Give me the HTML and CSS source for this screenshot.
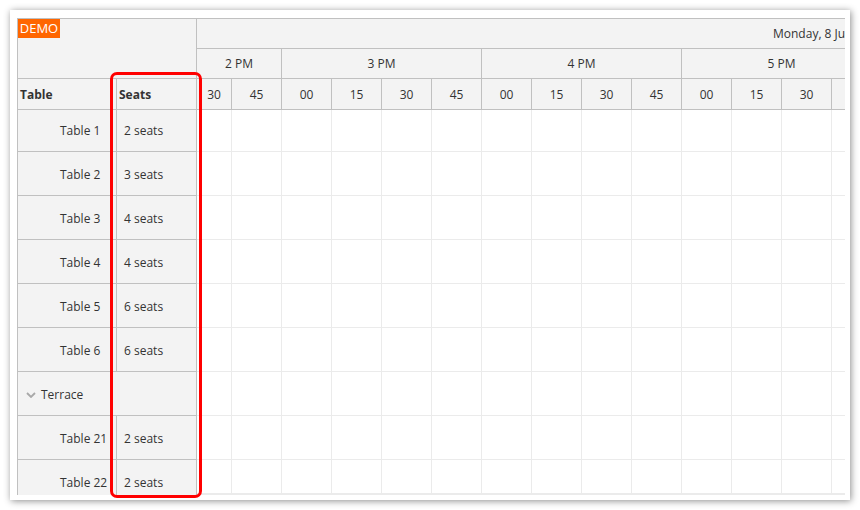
FILE: index.html
```html
<!DOCTYPE html>
<html lang="en">
<head>
    <meta charset="UTF-8">
    <meta name="viewport" content="width=device-width, initial-scale=1.0">
    <title>Restaurant Tables</title>
    <link rel="stylesheet" href="styles.css">
</head>
<body>

<div class="frame">
    <div class="scheduler">
        <span class="demo">DEMO</span>

        <!-- row headers: table + seats -->
        <div class="rows-pane">
            <div class="corner"></div>
            <div class="colheads">
                <div class="c-name">Table</div>
                <div class="c-seats">Seats</div>
            </div>
            <div class="row first"><div class="c-name">Table 1</div><div class="c-seats">2 seats</div></div>
            <div class="row"><div class="c-name">Table 2</div><div class="c-seats">3 seats</div></div>
            <div class="row"><div class="c-name">Table 3</div><div class="c-seats">4 seats</div></div>
            <div class="row"><div class="c-name">Table 4</div><div class="c-seats">4 seats</div></div>
            <div class="row"><div class="c-name">Table 5</div><div class="c-seats">6 seats</div></div>
            <div class="row"><div class="c-name">Table 6</div><div class="c-seats">6 seats</div></div>
            <div class="row group">
                <div class="c-group">
                    <svg class="chevron" width="10" height="6" viewBox="0 0 10 6"><polyline points="1,1 5,5 9,1" fill="none" stroke="#a8a8a8" stroke-width="1.8"/></svg>
                    Terrace
                </div>
            </div>
            <div class="row"><div class="c-name">Table 21</div><div class="c-seats">2 seats</div></div>
            <div class="row"><div class="c-name">Table 22</div><div class="c-seats">2 seats</div></div>
        </div>

        <!-- time grid -->
        <div class="timeline">
            <div class="t-date">Monday, 8 June 2020</div>
            <div class="t-hours">
                <div class="first">2 PM</div>
                <div>3 PM</div>
                <div>4 PM</div>
                <div>5 PM</div>
            </div>
            <div class="t-mins">
                <div class="first">30</div><div>45</div>
                <div>00</div><div>15</div><div>30</div><div>45</div>
                <div>00</div><div>15</div><div>30</div><div>45</div>
                <div>00</div><div>15</div><div>30</div><div>45</div>
            </div>
            <div class="t-body">
                <div class="line first"></div>
                <div class="line"></div>
                <div class="line"></div>
                <div class="line"></div>
                <div class="line"></div>
                <div class="line"></div>
                <div class="line"></div>
                <div class="line"></div>
                <div class="line"></div>
            </div>
            <div class="t-band"></div>
        </div>
    </div>

    <!-- red annotation round the seats column -->
    <div class="highlight"></div>
</div>

</body>
</html>
```

FILE: styles.css
```css
body {
    margin: 0;
    background-color: #fff;
    font-family: "Open Sans", "Noto Sans", sans-serif;
    font-size: 12px;
    color: #333;
}
.frame {
    position: relative;
    margin: 10px;
    width: 840px;
    height: 490px;
    box-sizing: border-box;
    padding: 8px 5px 5px 7px;
    background-color: #fff;
    box-shadow: 1px 1px 7px rgba(0, 0, 0, 0.45);
}
.scheduler {
    position: relative;
    display: flex;
    width: 828px;
    height: 477px;
    box-sizing: border-box;
    border-left: 1px solid #c0c0c0;
    border-top: 1px solid #c0c0c0;
    overflow: hidden;
}
.demo {
    position: absolute;
    left: 0;
    top: -1px;
    width: 42px;
    height: 20px;
    background-color: #ff6600;
    color: #fff;
    font-size: 13px;
    line-height: 20px;
    text-align: center;
}

/* row headers */
.rows-pane {
    flex: none;
    width: 179px;
    box-sizing: border-box;
    border-right: 1px solid #c0c0c0;
    background-color: #f3f3f3;
}
.corner {
    height: 59px;
    border-bottom: 1px solid #c0c0c0;
}
.colheads {
    display: flex;
    height: 30px;
    border-bottom: 1px solid #c0c0c0;
    font-weight: bold;
}
.c-name, .c-seats, .c-group {
    display: flex;
    align-items: center;
    box-sizing: border-box;
}
.c-name {
    flex: none;
    width: 99px;
    border-right: 1px solid #c0c0c0;
}
.colheads .c-name, .colheads .c-seats {
    padding-left: 2px;
}
.row {
    display: flex;
    height: 44px;
    box-sizing: border-box;
    border-bottom: 1px solid #c0c0c0;
}
.row.first {
    height: 42px;
}
.row .c-name, .row .c-seats, .row .c-group {
    padding-top: 2px;
}
.row.first .c-name, .row.first .c-seats {
    padding-top: 0;
}
.row .c-name {
    padding-left: 42px;
    white-space: nowrap;
}
.row .c-seats {
    padding-left: 7px;
}
.row .c-group {
    padding-left: 8px;
    gap: 5px;
}
.chevron {
    margin-top: 1px;
}

/* time grid */
.timeline {
    flex: 1;
    min-width: 0;
    display: flex;
    flex-direction: column;
    overflow: hidden;
}
.t-date, .t-hours, .t-mins {
    flex: none;
    display: flex;
    background-color: #f3f3f3;
    border-bottom: 1px solid #c0c0c0;
    white-space: nowrap;
}
.t-date {
    height: 29px;
    align-items: center;
    padding-left: 576px;
}
.t-hours {
    height: 29px;
}
.t-mins {
    height: 30px;
}
.t-hours div, .t-mins div {
    flex: none;
    display: flex;
    align-items: center;
    justify-content: center;
    box-sizing: border-box;
    border-right: 1px solid #c0c0c0;
}
.t-hours div {
    width: 200px;
}
.t-hours div.first {
    width: 85px;
}
.t-mins div {
    width: 50px;
}
.t-mins div.first {
    width: 35px;
}
.t-body {
    flex: 1;
    overflow: hidden;
    background-color: #fff;
    background-image: linear-gradient(to right, #ebebeb 1px, transparent 1px);
    background-size: 50px 100%;
    background-position: 34px 0;
}
.line {
    height: 44px;
    box-sizing: border-box;
    border-bottom: 1px solid #ebebeb;
}
.line.first {
    height: 42px;
}
.t-band {
    flex: none;
    height: 2px;
    background-color: #ebebeb;
}

.highlight {
    position: absolute;
    left: 100px;
    top: 62px;
    width: 92px;
    height: 426px;
    box-sizing: border-box;
    border: 3px solid #ff0000;
    border-radius: 7px;
}
```
